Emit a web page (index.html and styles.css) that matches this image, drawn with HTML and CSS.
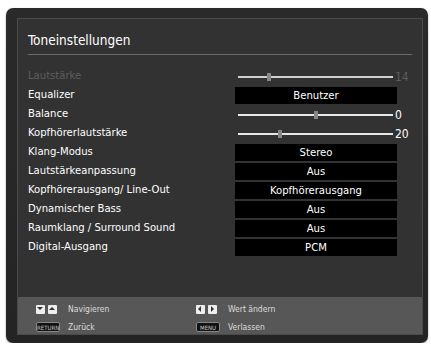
FILE: index.html
```
<!DOCTYPE html>
<html lang="de">
<head>
    <meta charset="UTF-8">
    <meta name="viewport" content="width=device-width, initial-scale=1.0">
    <title>Toneinstellungen</title>
    <link rel="stylesheet" href="styles.css">
</head>
<body>
    <div class="frame">
        <div class="panel">
            <h1 class="title">Toneinstellungen</h1>

            <div class="settings">
                <div class="row disabled">
                    <span class="label">Lautstärke</span>
                    <div class="slider"><span class="thumb" style="left: 20%"></span></div>
                    <span class="num">14</span>
                </div>
                <div class="row">
                    <span class="label">Equalizer</span>
                    <div class="value">Benutzer</div>
                </div>
                <div class="row">
                    <span class="label">Balance</span>
                    <div class="slider"><span class="thumb" style="left: 50%"></span></div>
                    <span class="num">0</span>
                </div>
                <div class="row">
                    <span class="label">Kopfhörerlautstärke</span>
                    <div class="slider"><span class="thumb" style="left: 27%"></span></div>
                    <span class="num">20</span>
                </div>
                <div class="row">
                    <span class="label">Klang-Modus</span>
                    <div class="value">Stereo</div>
                </div>
                <div class="row">
                    <span class="label">Lautstärkeanpassung</span>
                    <div class="value">Aus</div>
                </div>
                <div class="row">
                    <span class="label">Kopfhörerausgang/ Line-Out</span>
                    <div class="value">Kopfhörerausgang</div>
                </div>
                <div class="row">
                    <span class="label">Dynamischer Bass</span>
                    <div class="value">Aus</div>
                </div>
                <div class="row">
                    <span class="label">Raumklang / Surround Sound</span>
                    <div class="value">Aus</div>
                </div>
                <div class="row">
                    <span class="label">Digital-Ausgang</span>
                    <div class="value">PCM</div>
                </div>
            </div>

            <div class="help">
                <div class="hint">
                    <span class="keys"><span class="key down"></span><span class="key up"></span></span>
                    <span>Navigieren</span>
                </div>
                <div class="hint">
                    <span class="keys"><span class="key left"></span><span class="key right"></span></span>
                    <span>Wert ändern</span>
                </div>
                <div class="hint">
                    <span class="keys"><span class="pill">RETURN</span></span>
                    <span>Zurück</span>
                </div>
                <div class="hint">
                    <span class="keys"><span class="pill">MENU</span></span>
                    <span>Verlassen</span>
                </div>
            </div>
        </div>
    </div>
</body>
</html>
```
FILE: styles.css
```
body {
    margin: 0;
    background-color: #fff;
    font-family: "DejaVu Sans Condensed", "DejaVu Sans", sans-serif;
    color: #fff;
}

.frame {
    width: 422px;
    height: 335px;
    margin: 8px 0 0 6px;
    padding: 10px 5px 10px 11px;
    box-sizing: border-box;
    background: linear-gradient(#2a2a2a, #242424);
    border-radius: 7px;
    box-shadow: 0 1px 2px rgba(0, 0, 0, 0.4);
}

.panel {
    height: 100%;
    display: flex;
    flex-direction: column;
    border: 1px solid #4a4a4a;
    background-color: #323232;
}

.title {
    margin: 0 10px 0 10px;
    padding: 13px 0 6px 0;
    font-size: 13.5px;
    font-weight: normal;
    border-bottom: 1px solid #6a6a6a;
}

.settings {
    padding: 12px 0 0 10px;
    flex: 1;
}

.row {
    display: grid;
    grid-template-columns: 207px 162px 20px;
    align-items: center;
    height: 19px;
    font-size: 11.2px;
}

.row .label {
    padding-bottom: 3px;
}

.row.disabled {
    color: #5e5e5e;
}

.value {
    background-color: #000;
    height: 17px;
    line-height: 17px;
    text-align: center;
}

.slider {
    position: relative;
    height: 2px;
    margin: 0 4px 0 3px;
    background-color: #e8e8e8;
}

.disabled .slider {
    background-color: #cfcfcf;
}

.thumb {
    position: absolute;
    top: -3px;
    width: 4px;
    height: 8px;
    margin-left: -2px;
    background-color: #888;
}

.num {
    margin-left: -2px;
    font-size: 12px;
}

.help {
    display: grid;
    grid-template-columns: 160px 1fr;
    row-gap: 4px;
    padding: 5px 0 0 18px;
    background-color: #575757;
    font-size: 8.5px;
    color: #dcdcdc;
}

.hint {
    display: flex;
    align-items: center;
    height: 14px;
}

.keys {
    display: flex;
    gap: 3px;
    width: 32px;
}

.key {
    position: relative;
    width: 9px;
    height: 9px;
    background-color: #eee;
    border-radius: 1px;
}

.key::after {
    content: "";
    position: absolute;
    left: 1px;
    top: 1px;
    border: 3.5px solid transparent;
}

.key.down::after {
    top: 2.5px;
    border-top-color: #333;
    border-bottom-width: 0;
}

.key.up::after {
    top: 2px;
    border-bottom-color: #333;
    border-top-width: 0;
}

.key.left::after {
    left: 1.5px;
    border-right-color: #333;
    border-left-width: 0;
}

.key.right::after {
    left: 3px;
    border-left-color: #333;
    border-right-width: 0;
}

.pill {
    width: 24px;
    height: 10px;
    line-height: 10px;
    background-color: #111;
    border: 1px solid #888;
    border-radius: 2px;
    font-size: 6px;
    text-align: center;
    color: #ccc;
    box-sizing: border-box;
}
```
